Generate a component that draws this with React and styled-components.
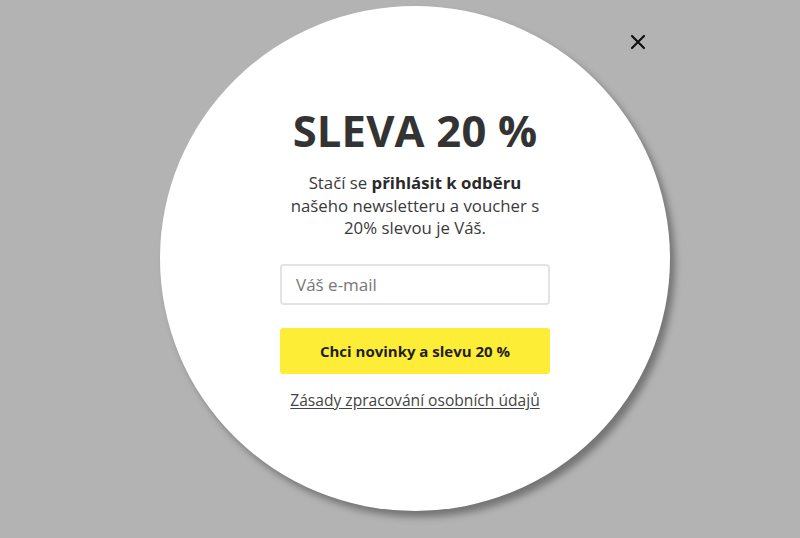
import React from "react";
import styled, { createGlobalStyle } from "styled-components";

const GlobalStyle = createGlobalStyle`
  html, body {
    margin: 0;
    padding: 0;
    background: #b3b3b3;
    font-family: "Open Sans", "Liberation Sans", sans-serif;
  }
`;

function App() {
  return (
    <>
      <GlobalStyle />
      <StOverlay>
        <StCircle>
          <StTitle>SLEVA 20 %</StTitle>
          <StText>
            Stačí se <b>přihlásit k odběru</b>
            <br />
            našeho newsletteru a voucher s
            <br />
            20% slevou je Váš.
          </StText>
          <StForm onSubmit={(e) => e.preventDefault()}>
            <StInput type="email" placeholder="Váš e-mail" />
            <StButton type="submit">Chci novinky a slevu 20 %</StButton>
          </StForm>
          <StLink href="#">Zásady zpracování osobních údajů</StLink>
        </StCircle>
        <StClose aria-label="Zavřít">
          <svg width="16" height="16" viewBox="0 0 16 16">
            <path d="M2 2 L14 14 M14 2 L2 14" stroke="#111" strokeWidth="2.2" strokeLinecap="round" />
          </svg>
        </StClose>
      </StOverlay>
    </>
  );
}

export default App;

const StOverlay = styled.div`
  position: relative;
  width: 800px;
  height: 538px;
  box-sizing: border-box;
  padding: 6px 0 0 160px;
  background: #b3b3b3;
  overflow: hidden;
`;

const StCircle = styled.div`
  width: 510px;
  height: 505px;
  border-radius: 50%;
  background: #fff;
  box-shadow: 5px 6px 7px rgba(0, 0, 0, 0.35);
  display: flex;
  flex-direction: column;
  align-items: center;
  box-sizing: border-box;
  padding-top: 97px;
  color: #333;
`;

const StTitle = styled.h1`
  margin: 0;
  font-size: 43.5px;
  line-height: 56px;
  font-weight: 700;
  color: #333;
  letter-spacing: 0.2px;
`;

const StText = styled.p`
  margin: 13px 0 0;
  font-size: 16.8px;
  line-height: 22.5px;
  text-align: center;
  color: #3a3a3a;

  b {
    font-weight: 700;
    color: #2a2a2a;
  }
`;

const StForm = styled.form`
  display: flex;
  flex-direction: column;
  gap: 23px;
  margin-top: 24px;
  width: 270px;
`;

const StInput = styled.input`
  box-sizing: border-box;
  width: 100%;
  height: 41px;
  border: 2px solid #e3e3e3;
  border-radius: 4px;
  padding: 0 14px;
  font-family: inherit;
  font-size: 17px;
  color: #333;
  outline: none;

  &::placeholder {
    color: #777;
  }
`;

const StButton = styled.button`
  box-sizing: border-box;
  width: 100%;
  height: 46px;
  border: none;
  border-radius: 3px;
  background: #feed36;
  font-family: inherit;
  font-size: 15px;
  font-weight: 700;
  color: #1e1e1e;
  cursor: pointer;
`;

const StLink = styled.a`
  margin-top: 16px;
  font-size: 15.6px;
  line-height: 20px;
  color: #444;
  text-decoration: underline;
  text-underline-offset: 2px;
`;

const StClose = styled.button`
  position: absolute;
  top: 34px;
  left: 630px;
  width: 16px;
  height: 16px;
  padding: 0;
  border: none;
  background: transparent;
  cursor: pointer;
  display: flex;
`;
